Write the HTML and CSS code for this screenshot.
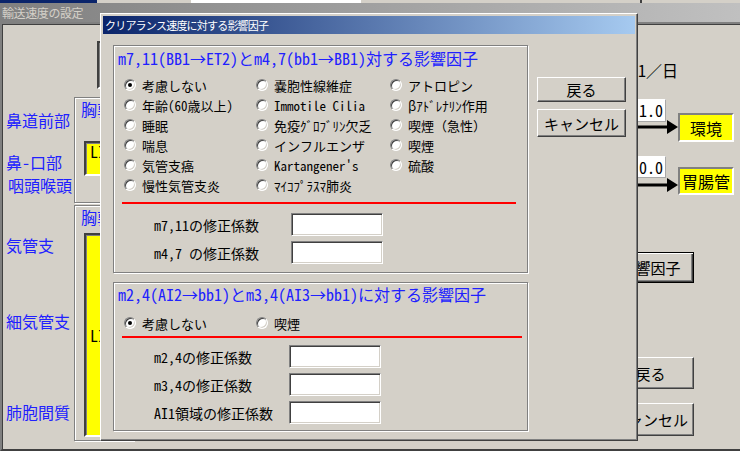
FILE: index.html
```html
<!DOCTYPE html>
<html lang="ja">
<head>
<meta charset="utf-8">
<title>輸送速度の設定</title>
<link rel="stylesheet" href="styles.css">
</head>
<body>
<div class="screen">
  <div class="topstrip">
    <span class="ts-navy"></span><span class="ts-gray"></span><span class="ts-white"></span><span class="ts-gap"></span><span class="ts-tick"></span>
  </div>
  <div class="app-title">輸送速度の設定</div>
  <div class="app-body">
    <div class="labels">
      <div class="site site-1">鼻道前部</div>
      <div class="site site-2">鼻-口部</div>
      <div class="site site-3">咽頭喉頭</div>
      <div class="site site-4">気管支</div>
      <div class="site site-5">細気管支</div>
      <div class="site site-6">肺胞間質</div>
    </div>
    <div class="chest">
      <div class="ybox ybox-top"></div>
      <div class="bgroup bgroup-1">
        <div class="bgroup-title">胸郭外</div>
        <div class="ybox ybox-1"><span>LI</span></div>
      </div>
      <div class="bgroup bgroup-2">
        <div class="bgroup-title">胸郭内</div>
        <div class="ybox ybox-2"><span>LI</span></div>
      </div>
    </div>
    <div class="spacer"></div>
    <div class="flow">
      <div class="rate">1／日</div>
      <div class="flow-row flow-row-1">
        <div class="flow-left">
          <div class="val val-1">1.0</div>
          <svg class="arrow arrow-1" width="41" height="14" viewBox="0 0 41 14"><rect x="0" y="5.5" width="32" height="3" fill="#000"/><polygon points="30,0 41,7 30,14" fill="#000"/></svg>
        </div>
        <div class="target target-1">環境</div>
      </div>
      <div class="flow-row flow-row-2">
        <div class="flow-left">
          <div class="val val-2">0.0</div>
          <svg class="arrow arrow-2" width="41" height="14" viewBox="0 0 41 14"><rect x="0" y="5.5" width="32" height="3" fill="#000"/><polygon points="30,0 41,7 30,14" fill="#000"/></svg>
        </div>
        <div class="target target-2">胃腸管</div>
      </div>
      <button class="btn btn-default bg-btn bg-btn-1">影響因子</button>
      <button class="btn bg-btn bg-btn-2">戻る</button>
      <button class="btn bg-btn bg-btn-3">キャンセル</button>
    </div>
  </div>

  <div class="dialog">
    <div class="dlg-title">クリアランス速度に対する影響因子</div>
    <div class="dlg-body">
      <div class="dlg-main">
        <section class="group group-1">
          <h2 class="group-title">m7,11(BB1→ET2)とm4,7(bb1→BB1)対する影響因子</h2>
          <div class="options">
            <label class="opt"><span class="radio checked"></span>考慮しない</label>
            <label class="opt"><span class="radio"></span>嚢胞性線維症</label>
            <label class="opt"><span class="radio"></span>アトロピン</label>
            <label class="opt"><span class="radio"></span>年齢(60歳以上)</label>
            <label class="opt"><span class="radio"></span>Immotile Cilia</label>
            <label class="opt"><span class="radio"></span>βｱﾄﾞﾚﾅﾘﾝ作用</label>
            <label class="opt"><span class="radio"></span>睡眠</label>
            <label class="opt"><span class="radio"></span>免疫ｸﾞﾛﾌﾞﾘﾝ欠乏</label>
            <label class="opt"><span class="radio"></span>喫煙（急性）</label>
            <label class="opt"><span class="radio"></span>喘息</label>
            <label class="opt"><span class="radio"></span>インフルエンザ</label>
            <label class="opt"><span class="radio"></span>喫煙</label>
            <label class="opt"><span class="radio"></span>気管支癌</label>
            <label class="opt"><span class="radio"></span>Kartangener's</label>
            <label class="opt"><span class="radio"></span>硫酸</label>
            <label class="opt"><span class="radio"></span>慢性気管支炎</label>
            <label class="opt"><span class="radio"></span>ﾏｲｺﾌﾟﾗｽﾏ肺炎</label>
          </div>
          <div class="redline"></div>
          <div class="fields">
            <div class="field"><span class="field-label">m7,11の修正係数</span><span class="input"></span></div>
            <div class="field"><span class="field-label">m4,7 の修正係数</span><span class="input"></span></div>
          </div>
        </section>
        <section class="group group-2">
          <h2 class="group-title">m2,4(AI2→bb1)とm3,4(AI3→bb1)に対する影響因子</h2>
          <div class="options">
            <label class="opt"><span class="radio checked"></span>考慮しない</label>
            <label class="opt"><span class="radio"></span>喫煙</label>
          </div>
          <div class="redline"></div>
          <div class="fields">
            <div class="field"><span class="field-label">m2,4の修正係数</span><span class="input"></span></div>
            <div class="field"><span class="field-label">m3,4の修正係数</span><span class="input"></span></div>
            <div class="field"><span class="field-label">AI1領域の修正係数</span><span class="input"></span></div>
          </div>
        </section>
      </div>
      <div class="dlg-buttons">
        <button class="btn dlg-btn dlg-btn-1">戻る</button>
        <button class="btn dlg-btn dlg-btn-2">キャンセル</button>
      </div>
    </div>
  </div>
</div>
</body>
</html>
```

FILE: styles.css
```css
* { box-sizing: border-box; margin: 0; padding: 0; }
html, body { width: 740px; height: 451px; overflow: hidden; }
body {
  background: #d4d0c8;
  font-family: "Noto Sans Mono CJK JP", "Noto Sans CJK JP", sans-serif;
  color: #000;
}
.screen { position: relative; width: 740px; height: 451px; overflow: hidden; background: #d4d0c8; }

/* top remnant strip */
.topstrip { display: flex; height: 3px; background: #d4d0c8; }
.ts-navy { width: 97px; background: #0a246a; }
.ts-gray { width: 94px; }
.ts-white { width: 170px; background: #fff; }
.ts-gap { width: 279px; }
.ts-tick { width: 2px; background: #404040; }

/* background window */
.app-title {
  height: 19px;
  background: linear-gradient(to right, #808080, #c0c0c0);
  color: #d4d0c8;
  font-size: 12px;
  line-height: 19px;
  padding-left: 2px;
  letter-spacing: -0.4px;
  white-space: nowrap;
}
.app-body {
  display: flex;
  height: 429px;
  border-top: 2px solid #808080;
  border-left: 2px solid #808080;
  border-bottom: 2px solid #404040;
  box-shadow: inset 1px 1px #404040;
}
.labels {
  width: 72px;
  flex: none;
  color: #2020ff;
  font-size: 16px;
  line-height: 18px;
  padding-left: 4px;
  white-space: nowrap;
}
.site-1 { margin-top: 87px; }
.site-2 { margin-top: 24px; }
.site-3 { margin-top: 5px; padding-left: 2px; }
.site-4 { margin-top: 42px; }
.site-5 { margin-top: 58px; }
.site-6 { margin-top: 73px; }

.chest { width: 60px; flex: none; display: flex; flex-direction: column; }
.ybox {
  background: #ffff00;
  border: 2px solid;
  border-color: #404040 #fff #fff #404040;
  box-shadow: inset 1px 1px #808080;
  font-size: 16px;
  line-height: 16px;
  padding-left: 4px;
  overflow: hidden;
}
.ybox-top { margin: 17px 0 0 23px; height: 48px; width: 40px; }
.bgroup {
  border: 1px solid #808080;
  box-shadow: inset 1px 1px #fff, 1px 1px #fff;
}
.bgroup-1 { margin-top: 8px; height: 106px; }
.bgroup-2 { margin-top: 2px; height: 236px; }
.bgroup-title {
  color: #2020ff;
  font-size: 16px;
  line-height: 18px;
  padding: 2px 0 0 6px;
  white-space: nowrap;
}
.ybox-1 { margin: 23px 0 0 9px; height: 35px; }
.ybox-2 { margin: 7px 0 0 9px; height: 204px; display: flex; align-items: center; }

.spacer { flex: 1; }
.flow { width: 135px; flex: none; display: flex; flex-direction: column; align-items: flex-start; }
.rate { margin: 37px 0 0 33px; font-size: 16px; line-height: 18px; white-space: nowrap; }
.flow-row { display: flex; margin-left: 32px; }
.flow-row-1 { margin-top: 20px; }
.flow-row-2 { margin-top: 14px; }
.flow-left { width: 41px; display: flex; flex-direction: column; }
.val {
  width: 29px;
  background: #fff;
  border: 1px solid;
  border-color: #fff #a8a8a8 #a8a8a8 #fff;
  font-size: 16px;
  line-height: 20px;
  padding-left: 1px;
}
.val-1 { height: 23px; }
.val-2 { height: 22px; }
.arrow { display: block; }
.arrow-1 { margin-top: -2px; }
.arrow-2 { margin-top: 0; }
.target {
  width: 56px;
  background: #ffff00;
  border: 2px solid;
  border-color: #808080 #fff #fff #808080;
  font-size: 16px;
  display: flex;
  align-items: center;
  justify-content: center;
}
.target-1 { margin-top: 14px; height: 29px; }
.target-2 { margin-top: 11px; height: 28px; }

.btn {
  font-family: inherit;
  font-size: 15px;
  color: #000;
  background: #d4d0c8;
  border: 1px solid;
  border-color: #fff #404040 #404040 #fff;
  box-shadow: inset -1px -1px #808080;
  display: flex;
  align-items: center;
  justify-content: center;
  padding: 0;
  white-space: nowrap;
}
.btn-default {
  border: 1px solid #000;
  box-shadow: inset 1px 1px #fff, inset -1px -1px #404040, inset -2px -2px #808080;
}
.bg-btn { margin-left: 2px; width: 87px; }
.bg-btn-1 { margin-top: 57px; height: 31px; }
.bg-btn-2 { margin-top: 74px; height: 32px; }
.bg-btn-3 { margin-top: 14px; height: 33px; }

/* dialog */
.dialog {
  position: absolute;
  left: 100px;
  top: 13px;
  width: 538px;
  height: 428px;
  background: #d4d0c8;
  border: 1px solid;
  border-color: #fff #404040 #404040 #fff;
  box-shadow: inset -1px -1px #808080;
  padding: 2px;
}
.dlg-title {
  height: 18px;
  background: linear-gradient(to right, #0a246a, #a6caf0);
  color: #fff;
  font-size: 11px;
  line-height: 18px;
  letter-spacing: -0.8px;
  padding-left: 2px;
  white-space: nowrap;
}
.dlg-body { display: flex; padding: 11px 0 0 10px; }
.dlg-main { width: 415px; flex: none; }
.group {
  width: 415px;
  border: 1px solid #808080;
  box-shadow: inset 1px 1px #fff, 1px 1px #fff;
}
.group-1 { height: 228px; }
.group-2 { height: 149px; margin-top: 9px; }
.group-title {
  font-size: 16px;
  font-weight: normal;
  color: #2020ff;
  line-height: 18px;
  padding: 3px 0 0 4px;
  white-space: nowrap;
}
.group-2 .group-title { padding-top: 2px; }
.options {
  display: grid;
  grid-template-columns: 132px 134px auto;
  grid-auto-rows: 20px;
  margin: 8px 0 0 10px;
}
.group-2 .options { margin-top: 10px; }
.opt {
  display: flex;
  align-items: center;
  gap: 6px;
  font-size: 13px;
  white-space: nowrap;
}
.radio {
  flex: none;
  position: relative;
  width: 12px;
  height: 12px;
  border-radius: 50%;
  background: #fff;
  border: 1px solid;
  border-color: #808080 #fff #fff #808080;
  box-shadow: inset 1px 1px #404040, inset -1px -1px #d4d0c8;
}
.radio.checked::after {
  content: "";
  position: absolute;
  left: 3px;
  top: 3px;
  width: 4px;
  height: 4px;
  border-radius: 50%;
  background: #000;
}
.redline { height: 2px; background: #ff0000; margin: 7px 0 0 8px; width: 394px; }
.group-2 .redline { margin-top: 3px; width: 400px; }
.fields { display: flex; flex-direction: column; gap: 5px; margin-top: 9px; }
.group-2 .fields { margin-top: 7px; }
.field { display: flex; align-items: center; height: 23px; }
.field-label { width: 137px; margin-left: 40px; font-size: 14px; white-space: nowrap; }
.group-2 .field-label { width: 135px; }
.input {
  width: 92px;
  height: 23px;
  background: #fff;
  border: 1px solid;
  border-color: #808080 #fff #fff #808080;
  box-shadow: inset 1px 1px #404040, inset -1px -1px #d4d0c8;
}
.dlg-buttons { display: flex; flex-direction: column; gap: 7px; margin: 32px 0 0 9px; }
.dlg-btn { width: 89px; }
.dlg-btn-1 { height: 25px; }
.dlg-btn-2 { height: 28px; }
```
